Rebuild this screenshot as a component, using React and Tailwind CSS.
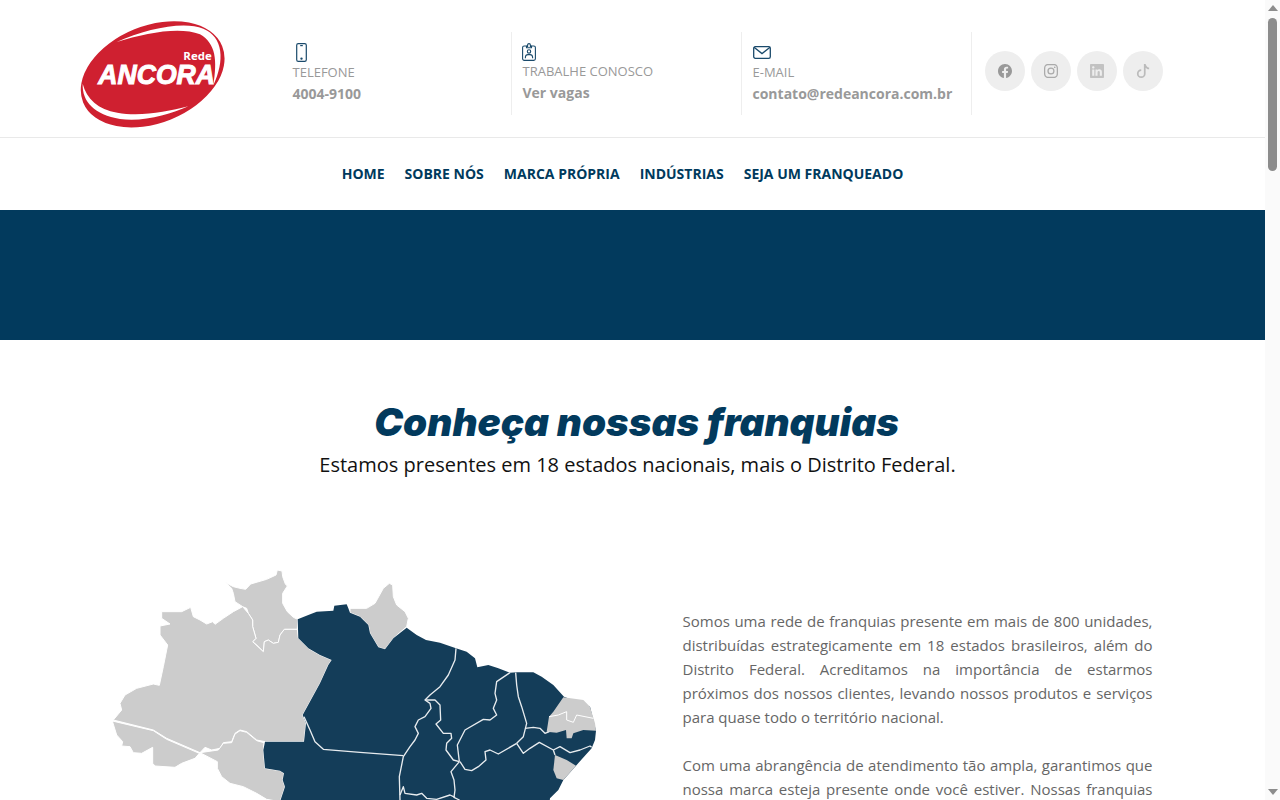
import React from "react";
import { BsFacebook, BsInstagram, BsLinkedin, BsTiktok } from "react-icons/bs";

const NAV = ["Home", "Sobre nós", "Marca própria", "Indústrias", "Seja um franqueado"];

function Logo() {
  return (
    <svg viewBox="45 50 480 345" className="w-[160px] h-[115px]">
      <ellipse cx="278" cy="222" rx="225" ry="146" transform="rotate(-22 278 222)" fill="#cf2030" />
      <path d="M170 125C260 85 370 62 430 85C490 110 495 180 460 255C472 180 468 130 420 102C360 78 260 97 170 125Z" fill="#fff" />
      <path d="M68 250C66 305 104 342 180 356C250 366 330 342 385 318C320 334 240 350 172 337C114 327 80 296 68 250Z" fill="#fff" />
      <text x="370" y="180" fill="#fff" fontFamily="'Open Sans', sans-serif" fontWeight="700" fontSize="30" textLength="85" lengthAdjust="spacingAndGlyphs">Rede</text>
      <text x="115" y="250" fill="#fff" stroke="#fff" strokeWidth="3" fontFamily="'Liberation Sans', sans-serif" fontWeight="700" fontStyle="italic" fontSize="82" textLength="350" lengthAdjust="spacingAndGlyphs">ANCORA</text>
    </svg>
  );
}

function PhoneIcon() {
  return (
    <svg viewBox="0 0 11 19" className="w-[11px] h-[19px] ml-[3px]" fill="none" stroke="#1a4a6b" strokeWidth="1.2">
      <rect x="0.7" y="0.7" width="9.6" height="17.6" rx="1.6" />
      <path d="M4.2 2.6H6.8" />
      <circle cx="5.5" cy="15.6" r="0.6" fill="#1a4a6b" />
    </svg>
  );
}

function MailIcon() {
  return (
    <svg viewBox="0 0 18 13" className="w-[18px] h-[13px]" fill="none" stroke="#1a4a6b" strokeWidth="1.3">
      <rect x="0.7" y="0.7" width="16.6" height="11.6" rx="1.6" />
      <path d="M1 1.2L9 7.6L17 1.2" />
    </svg>
  );
}

function BadgeIcon() {
  return (
    <svg viewBox="0 0 14 18" className="w-[14px] h-[18px] -ml-[1px]" fill="none" stroke="#1a4a6b" strokeWidth="1.1">
      <rect x="0.6" y="3" width="12.8" height="14.4" rx="1.6" />
      <path d="M4.5 4.8V3.4H5.6V2A1.4 1.4 0 0 1 8.4 2V3.4H9.5V4.8Z" fill="#fff" />
      <circle cx="7" cy="8.4" r="1.7" />
      <path d="M3.4 15.2V14A2.6 2.6 0 0 1 6 11.6H8A2.6 2.6 0 0 1 10.6 14V15.2" />
    </svg>
  );
}

function InfoCol({ icon, label, value, up }) {
  return (
    <div className="w-[230px] h-[83px] pl-[10.5px] pt-[10px] flex flex-col border-r border-[#eeeeee]">
      <div className="h-[20px] flex items-center">{icon}</div>
      <div className={"text-[13px] leading-[18px] text-[#999999] " + (up ? "mt-[0px]" : "mt-[1px]")}>{label}</div>
      <div className="text-[14px] leading-[20px] font-bold text-[#999999] mt-[3px]">{value}</div>
    </div>
  );
}

function Social({ children, tone }) {
  return (
    <a className={"w-[40px] h-[40px] rounded-full bg-[#eeeeee] flex items-center justify-center text-[14px] " + tone}>
      {children}
    </a>
  );
}

function BrazilMap() {
  return (
    <svg viewBox="0 0 1530 1500" className="w-[510px] h-[500px] block">
      {/* estados em cinza */}
      <g fill="#cccccc" stroke="#ffffff" strokeWidth="3" strokeLinejoin="round">
        <path d="M375 67L400 80L420 85L437 88L452 72L500 58L528 45L532 30L546 33L548 50L556 72L562 78L548 100L548 130L562 155L580 172L593 178L592 208L553 208L540 225L535 247L520 250L505 240L493 245L490 275L470 255L458 245L468 235L458 200L458 180L445 160L440 145L428 140L405 125L400 100L395 85Z" />
        <path d="M185 155L245 155L272 142L280 170L300 180L320 192L338 185L345 193L370 175L400 155L428 140L445 160L458 180L458 200L468 235L458 245L490 275L493 245L505 240L520 250L535 247L540 225L553 208L592 208L595 235L625 265L660 285L695 300L685 315L660 370L608 465L618 490L612 545L495 545L470 540L440 515L420 510L405 520L395 545L370 548L360 565L335 570L315 562L300 578L200 535L160 510L40 480L65 450L60 430L75 405L110 385L160 372L178 376L190 320L203 255L180 225L180 198L210 192L185 175Z" />
        <path d="M37 483L160 512L200 538L298 580L285 595L245 610L225 622L165 618L158 610L158 562L125 580L100 578L90 560L65 558L68 545L50 525Z" />
        <path d="M300 578L355 570L370 550L395 548L405 522L420 512L440 517L470 542L492 548L490 570L495 625L540 632L552 640L548 660L555 680L540 725L500 718L470 700L430 680L390 670L365 650L352 625L352 605Z" />
        <path d="M750 145L800 145L825 130L850 85L868 70L878 75L880 110L890 135L915 155L925 175L920 200L880 235L855 268L835 262L810 220L805 195L780 170L750 158Z" />
      </g>
      {/* estados em azul */}
      <path
        fill="#143d59"
        d="M593 178L625 165L650 155L700 152L703 137L740 133L745 145L750 158L780 170L805 195L810 220L835 262L855 268L880 235L920 203L950 225L978 240L1020 248L1068 265L1100 275L1125 295L1132 322L1165 315L1195 325L1230 338L1250 337L1300 337L1325 350L1360 375L1392 410L1470 440L1488 512L1485 540L1475 565L1428 617L1390 660L1375 690L1350 715L1340 800L1330 900L1320 980L1290 1050L1200 1080L1100 1110L1020 1170L1010 1260L980 1340L900 1440L840 1400L760 1320L830 1230L850 1150L800 1100L700 1100L640 1060L600 960L540 960L520 860L540 725L555 680L548 660L552 640L540 632L495 625L490 570L495 545L612 545L618 490L608 465L660 370L685 315L695 300L660 285L625 265L595 235Z"
      />
      {/* nordeste em cinza */}
      <g fill="#cccccc">
        <path d="M1390 412L1450 420L1470 440L1485 490L1488 512L1450 510L1420 520L1415 535L1400 535L1398 510L1370 518L1340 515L1347 470L1360 455Z" />
        <path d="M1365 585L1400 600L1428 617L1390 660L1370 655L1360 630Z" />
      </g>
      {/* divisas */}
      <g fill="none" stroke="#e8ecef" strokeWidth="4" strokeLinejoin="round">
        <path d="M612 470L630 510L645 545L670 568L780 577L910 587" />
        <path d="M1068 265L1065 300L1045 345L1020 380L990 405L975 420L990 430L993 445L975 470L955 480L945 500L955 520L945 540L930 560L910 590L898 650L900 720L892 820" />
        <path d="M975 420L1005 420L1020 435L1022 480L1008 492L1030 520L1053 520L1055 535L1040 550L1038 570L1060 600L1078 605" />
        <path d="M1230 338L1190 365L1185 400L1190 420L1180 445L1190 465L1170 480L1150 478L1095 510L1072 555L1078 605" />
        <path d="M1247 338L1250 375L1255 410L1265 440L1280 490L1270 530L1250 550" />
        <path d="M1275 505L1300 502L1320 505L1335 520L1348 515" />
        <path d="M1080 605L1095 628L1115 632L1135 620L1158 600L1155 575L1170 570L1195 582L1250 550" />
        <path d="M1250 550L1270 580L1290 565L1318 547L1360 570L1365 585" />
        <path d="M1360 570L1380 560L1410 578L1440 570L1470 558L1475 562" />
        <path d="M1078 605L1053 635L1062 660L1065 690L1062 712L1078 720L1075 800L1090 880L1150 900" />
        <path d="M900 705L910 680L915 700L950 705L965 700L980 715L1010 718L1050 705L1065 712" />
        <path d="M900 815L960 880L880 960L800 1040L700 1100M960 880L1090 880L1100 1000L1100 1110M850 1150L1020 1170M800 1240L1010 1260" />
      </g>
      <g fill="none" stroke="#ffffff" strokeWidth="3" strokeLinejoin="round">
        <path d="M1347 470L1375 465L1400 455L1400 480L1420 487L1430 465L1480 475" />
      </g>
    </svg>
  );
}

function ScrollRail() {
  return (
    <div className="fixed top-0 right-0 w-[15px] h-[800px] bg-[#fafafa] flex flex-col items-center">
      <div className="mt-[5px] w-0 h-0 border-x-[5px] border-x-transparent border-b-[6px] border-b-[#8c8c8c]" />
      <div className="mt-[7px] w-[9px] h-[153px] rounded-full bg-[#8c8c8c]" />
      <div className="mt-auto mb-[5px] w-0 h-0 border-x-[5px] border-x-transparent border-t-[6px] border-t-[#8c8c8c]" />
    </div>
  );
}

export default function App() {
  return (
    <div className="min-h-[4005px] w-[1265px] bg-white font-['Open_Sans',sans-serif]">
      <header className="h-[138px] border-b border-[#e9e9e9] pl-[75px] flex items-start">
        <div className="w-[207px] pt-[17px] shrink-0">
          <Logo />
        </div>
        <div className="flex mt-[32px]">
          <InfoCol icon={<PhoneIcon />} label="TELEFONE" value="4004-9100" />
          <InfoCol icon={<BadgeIcon />} label="TRABALHE CONOSCO" value="Ver vagas" up />
          <InfoCol icon={<MailIcon />} label="E-MAIL" value="contato@redeancora.com.br" />
          <div className="flex gap-[6px] pl-[13px] pt-[19px]">
            <Social tone="text-[#999999]"><BsFacebook /></Social>
            <Social tone="text-[#aaaaaa]"><BsInstagram /></Social>
            <Social tone="text-[#c2c2c2]"><BsLinkedin /></Social>
            <Social tone="text-[#bbbbbb]"><BsTiktok /></Social>
          </div>
        </div>
      </header>

      <nav className="h-[72px] pb-[2px] flex items-center justify-center gap-[20px] pr-[20px]">
        {NAV.map((item) => (
          <a key={item} className="text-[14px] font-bold uppercase text-[#003a5d]">{item}</a>
        ))}
      </nav>

      <div className="h-[130px] bg-[#023a5d]" />

      <section className="pt-[57px] text-center">
        <h1 className="text-[38.7px] leading-[50px] font-['Inter',sans-serif] font-black italic text-[#023a5d] pl-[8px]">
          Conheça nossas franquias
        </h1>
        <p className="text-[20px] leading-[30px] text-[#111111] mt-[3px] pl-[10px]">
          Estamos presentes em 18 estados nacionais, mais o Distrito Federal.
        </p>
      </section>

      <section className="grid grid-cols-[682.5px_470px] pt-[80px]">
        <div className="pl-[100px]">
          <BrazilMap />
        </div>
        <div className="pt-[49px] text-[15px] leading-[24px] text-[#666666] text-justify">
          <p>
            Somos uma rede de franquias presente em mais de 800 unidades, distribuídas estrategicamente em 18 estados
            brasileiros, além do Distrito Federal. Acreditamos na importância de estarmos próximos dos nossos clientes,
            levando nossos produtos e serviços para quase todo o território nacional.
          </p>
          <p className="mt-[24px]">
            Com uma abrangência de atendimento tão ampla, garantimos que nossa marca esteja presente onde você estiver.
            Nossas franquias oferecem qualidade, confiança e proximidade em cada atendimento.
          </p>
        </div>
      </section>

      <ScrollRail />
    </div>
  );
}
